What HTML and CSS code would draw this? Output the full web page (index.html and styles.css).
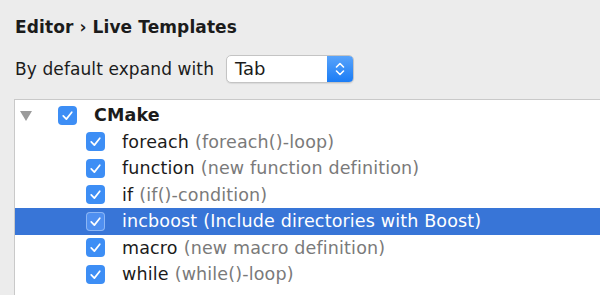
FILE: index.html
```html
<!DOCTYPE html>
<html lang="en">
<head>
  <meta charset="UTF-8">
  <title>Editor › Live Templates</title>
  <link rel="stylesheet" href="styles.css">
</head>
<body>
  <div class="window">
    <div class="header">
      <h1>Editor › Live Templates</h1>
      <div class="expand-row">
        <span class="expand-label">By default expand with</span>
        <div class="select">
          <span class="select-value">Tab</span>
          <span class="stepper">
            <svg width="12" height="18" viewBox="0 0 12 18">
              <path d="M2.5 7 L6 3.5 L9.5 7" />
              <path d="M2.5 11 L6 14.5 L9.5 11" />
            </svg>
          </span>
        </div>
      </div>
    </div>

    <div class="tree">
      <div class="row group">
        <span class="arrow"></span>
        <span class="check"><svg viewBox="0 0 20 20"><path d="M5.5 10.5 L8.8 13.8 L14.5 6.5" /></svg></span>
        <span class="name">CMake</span>
      </div>
      <div class="row item">
        <span class="check"><svg viewBox="0 0 20 20"><path d="M5.5 10.5 L8.8 13.8 L14.5 6.5" /></svg></span>
        <span class="name">foreach</span>
        <span class="desc">(foreach()-loop)</span>
      </div>
      <div class="row item">
        <span class="check"><svg viewBox="0 0 20 20"><path d="M5.5 10.5 L8.8 13.8 L14.5 6.5" /></svg></span>
        <span class="name">function</span>
        <span class="desc">(new function definition)</span>
      </div>
      <div class="row item">
        <span class="check"><svg viewBox="0 0 20 20"><path d="M5.5 10.5 L8.8 13.8 L14.5 6.5" /></svg></span>
        <span class="name">if</span>
        <span class="desc">(if()-condition)</span>
      </div>
      <div class="row item selected">
        <span class="check"><svg viewBox="0 0 20 20"><path d="M5.5 10.5 L8.8 13.8 L14.5 6.5" /></svg></span>
        <span class="name">incboost</span>
        <span class="desc">(Include directories with Boost)</span>
      </div>
      <div class="row item">
        <span class="check"><svg viewBox="0 0 20 20"><path d="M5.5 10.5 L8.8 13.8 L14.5 6.5" /></svg></span>
        <span class="name">macro</span>
        <span class="desc">(new macro definition)</span>
      </div>
      <div class="row item">
        <span class="check"><svg viewBox="0 0 20 20"><path d="M5.5 10.5 L8.8 13.8 L14.5 6.5" /></svg></span>
        <span class="name">while</span>
        <span class="desc">(while()-loop)</span>
      </div>
    </div>
  </div>
</body>
</html>
```

FILE: styles.css
```css
body {
  margin: 0;
  padding: 0;
  width: 600px;
  height: 295px;
  overflow: hidden;
  background-color: #ececec;
  font-family: 'DejaVu Sans', 'Noto Sans', sans-serif;
  color: #1b1b1b;
}

.window {
  width: 600px;
  height: 295px;
  display: flex;
  flex-direction: column;
}

.header {
  padding: 16px 0 0 15px;
  height: 84px;
  box-sizing: border-box;
}

.header h1 {
  margin: 0;
  font-size: 17px;
  font-weight: bold;
  line-height: 22px;
  letter-spacing: 0.1px;
}

.expand-row {
  display: flex;
  align-items: center;
  margin-top: 17px;
}

.expand-label {
  font-size: 17px;
  letter-spacing: 0.1px;
  width: 211px;
}

.select {
  width: 128px;
  height: 28px;
  box-sizing: border-box;
  display: flex;
  align-items: stretch;
  background: #fff;
  border: 1px solid #c4c4c4;
  border-radius: 5px;
  box-shadow: 0 1px 1px rgba(0, 0, 0, 0.08);
  overflow: hidden;
}

.select-value {
  flex-grow: 1;
  padding-left: 8px;
  font-size: 18px;
  line-height: 26px;
}

.stepper {
  width: 26px;
  display: flex;
  justify-content: center;
  align-items: center;
  background: linear-gradient(#58a3fb, #1b7cf5);
}

.stepper path {
  fill: none;
  stroke: #fff;
  stroke-width: 1.6;
  stroke-linecap: round;
  stroke-linejoin: round;
}

.tree {
  flex-grow: 1;
  margin-left: 14px;
  margin-top: 15px;
  padding-top: 2px;
  background: #fff;
  border-top: 1px solid #c9c9c9;
  border-left: 1px solid #c9c9c9;
}

.row {
  height: 26.5px;
  display: flex;
  align-items: center;
  font-size: 17.5px;
  letter-spacing: 0.15px;
  white-space: nowrap;
}

.row.group {
  padding-left: 5px;
}

.row.item {
  padding-left: 71px;
}

.arrow {
  width: 0;
  height: 0;
  border-left: 6px solid transparent;
  border-right: 6px solid transparent;
  border-top: 10px solid #9b9b9b;
  margin-right: 26px;
  margin-top: 2px;
}

.check {
  width: 19px;
  height: 19px;
  border-radius: 4px;
  background: #3d8ef5;
  display: flex;
  margin-right: 17px;
}

.check svg {
  width: 19px;
  height: 19px;
}

.check path {
  fill: none;
  stroke: #fff;
  stroke-width: 1.8;
  stroke-linecap: round;
  stroke-linejoin: round;
}

.group .name {
  font-weight: bold;
}

.name {
  margin-right: 6px;
}

.desc {
  color: #7a7a7a;
}

.selected {
  background: #3875d7;
  color: #fff;
}

.selected .desc {
  color: #fff;
}

.selected .check {
  background: #4f8ff0;
  box-shadow: inset 0 0 0 1px rgba(255, 255, 255, 0.35);
}
```
